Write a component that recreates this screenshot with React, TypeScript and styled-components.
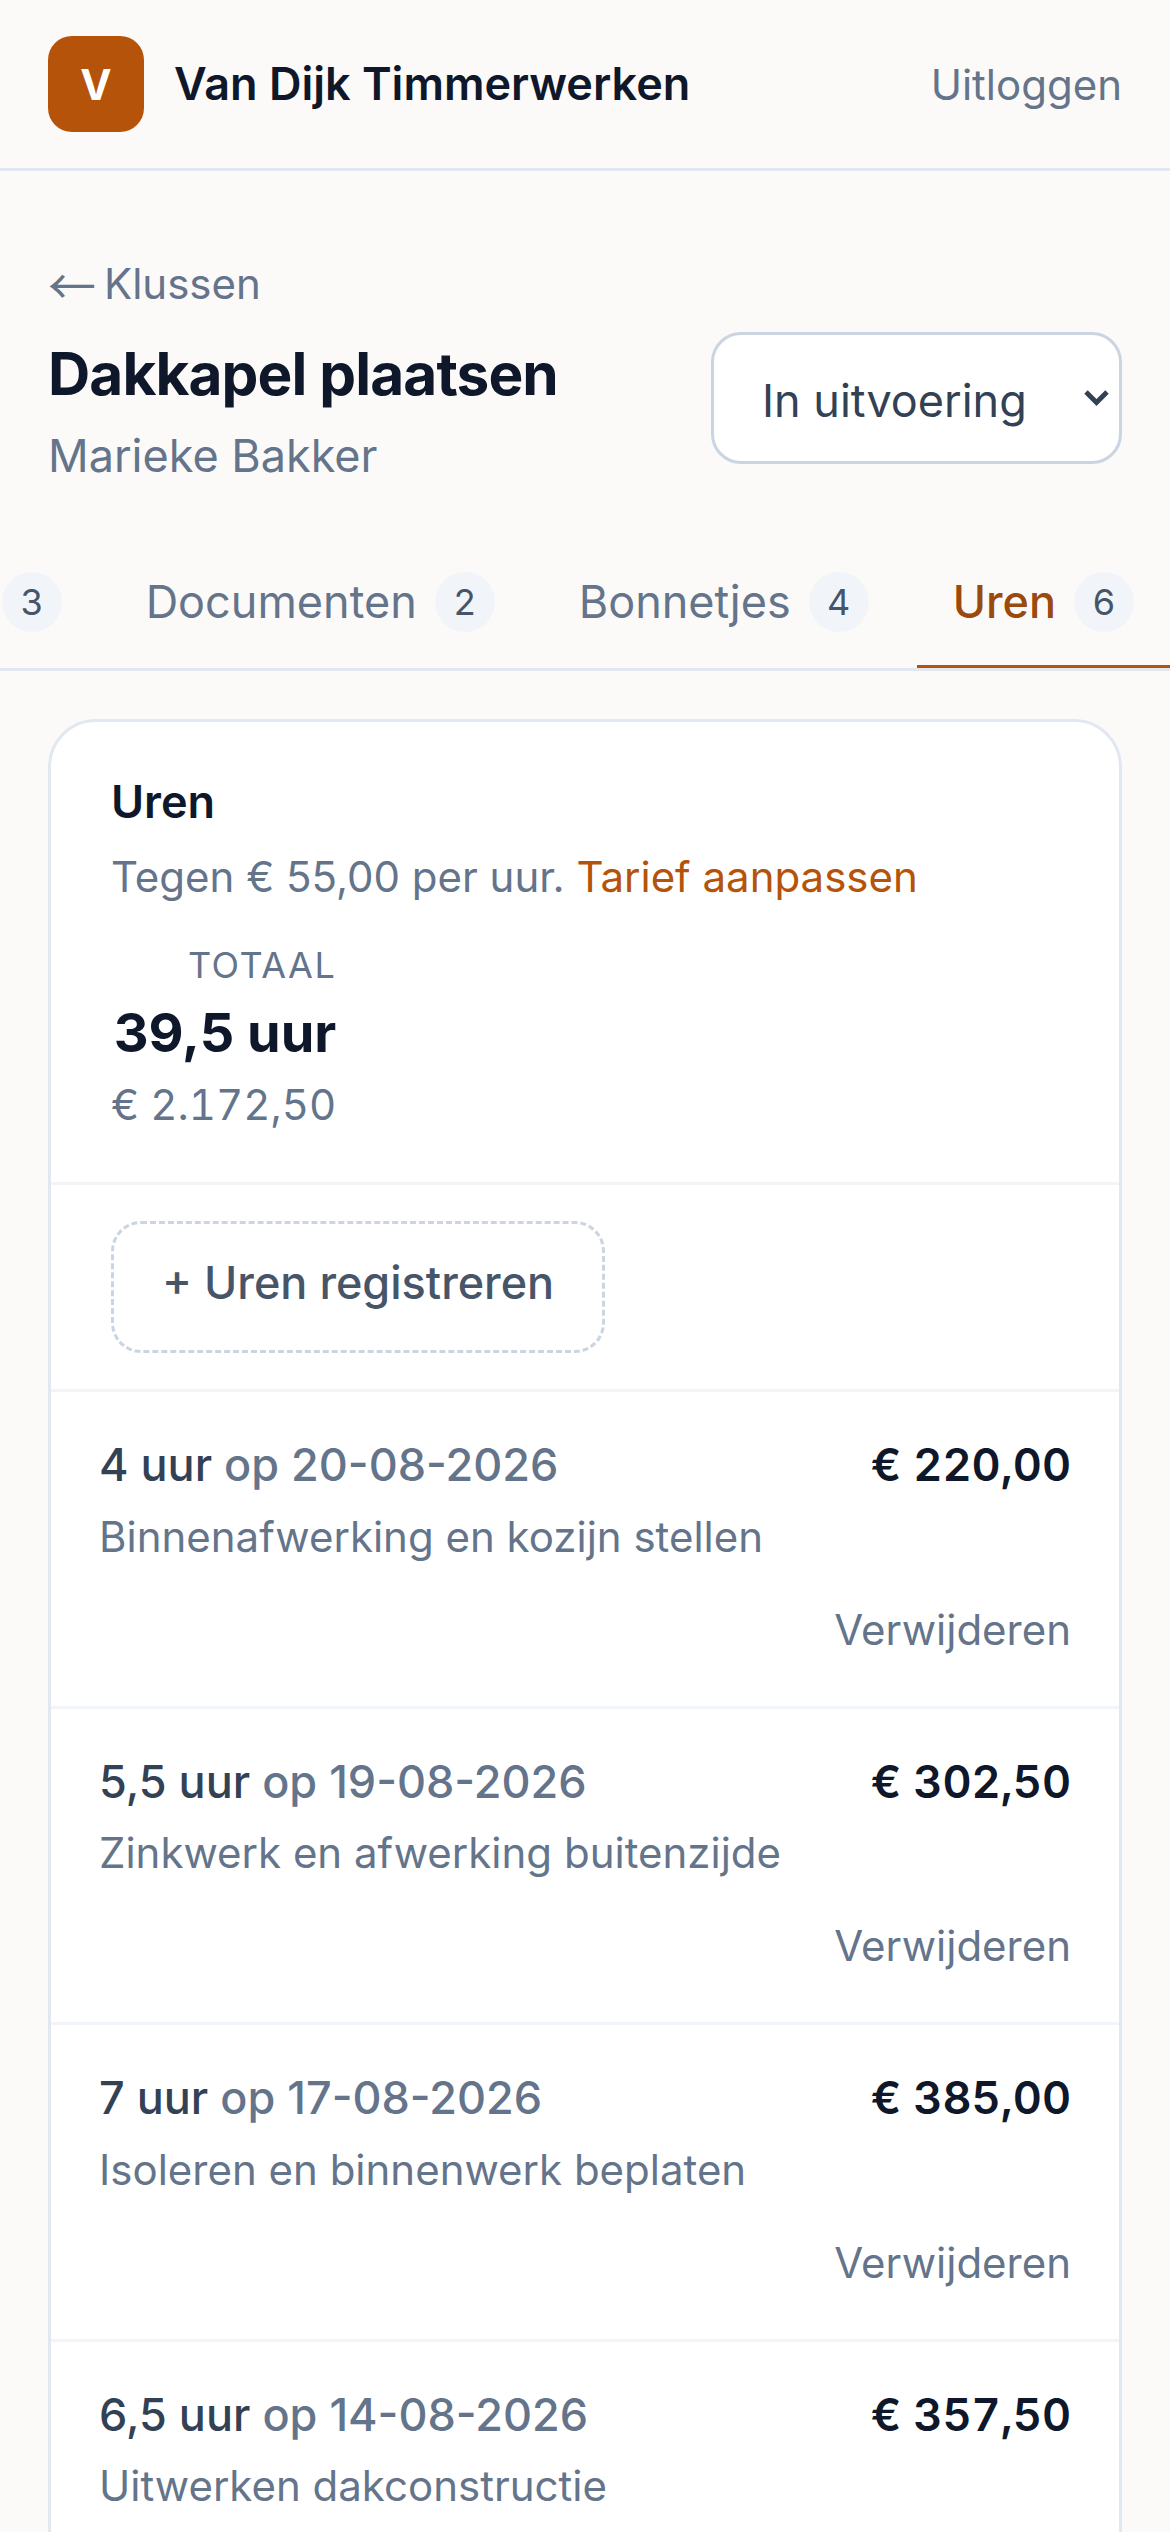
import styled, { createGlobalStyle } from "styled-components";

// the reference is a 390px phone layout shot at 3x
const GlobalStyle = createGlobalStyle`
  html {
    zoom: 3;
  }
  body {
    margin: 0;
    background: #fcfaf8;
    font-family: Inter, "Noto Sans", sans-serif;
    line-height: 1.5;
    color: #0f172a;
  }
  * {
    box-sizing: border-box;
  }
`;

const chevron =
  "data:image/svg+xml,%3Csvg xmlns='http://www.w3.org/2000/svg' viewBox='0 0 9 6'%3E%3Cpath d='M1 1l3.5 3.5L8 1' fill='none' stroke='%23334155' stroke-width='1.6'/%3E%3C/svg%3E";

const Page = styled.div`
  height: 844px;
  overflow: hidden;
`;

const Header = styled.header`
  display: flex;
  align-items: center;
  justify-content: space-between;
  padding: 12px 16px;
  border-bottom: 1px solid #e2e8f0;
`;

const Brand = styled.div`
  display: flex;
  align-items: center;
  gap: 10px;
`;

const Logo = styled.div`
  width: 32px;
  height: 32px;
  border-radius: 8px;
  background: #b45309;
  color: #fff;
  font-size: 14px;
  font-weight: 700;
  display: flex;
  align-items: center;
  justify-content: center;
`;

const BrandName = styled.div`
  font-size: 15px;
  font-weight: 600;
`;

const Logout = styled.a`
  font-size: 14px;
  color: #64748b;
`;

const Top = styled.section`
  padding: 27px 16px 0;
`;

const Back = styled.a`
  display: block;
  height: 21px;
  font-size: 14px;
  color: #64748b;
  margin-bottom: 5.5px;
`;

const Arrow = styled.span`
  font-family: "Noto Sans CJK SC", sans-serif;
  font-size: 16px;
  line-height: 1;
  vertical-align: -1.5px;
  margin-right: -1.3px;
`;

const TitleRow = styled.div`
  display: flex;
  align-items: flex-start;
  justify-content: space-between;
  gap: 12px;
`;

const Title = styled.h1`
  margin: 0 0 2px;
  font-size: 19.5px;
  line-height: 28px;
  font-weight: 700;
  letter-spacing: -0.3px;
`;

const Customer = styled.div`
  font-size: 15px;
  color: #64748b;
`;

const StatusSelect = styled.select`
  appearance: none;
  height: 44px;
  padding: 2px 0 0 16px;
  width: 137px;
  border: 1px solid #cbd5e1;
  border-radius: 10px;
  background: #fff url("${chevron}") no-repeat right 3px center / 9px 6px;
  color: #334155;
  font-family: inherit;
  font-size: 15px;
`;

const Tabs = styled.nav`
  display: flex;
  justify-content: flex-end;
  gap: 4px;
  margin-top: 14.5px;
  overflow: hidden;
  border-bottom: 1px solid #e2e8f0;
`;

const Tab = styled.a<{ $active?: boolean }>`
  flex: none;
  display: flex;
  align-items: center;
  gap: 6px;
  padding: 13px 12px 11px;
  font-size: 15px;
  line-height: 20px;
  color: ${(p) => (p.$active ? "#9a4a0c" : "#64748b")};
  font-weight: ${(p) => (p.$active ? 500 : 400)};
  border-bottom: 1px solid ${(p) => (p.$active ? "#b45309" : "transparent")};
`;

const Badge = styled.span`
  min-width: 20px;
  padding: 0 6px;
  height: 20px;
  border-radius: 999px;
  background: #f1f5f9;
  color: #475569;
  font-size: 12px;
  font-weight: 400;
  display: flex;
  align-items: center;
  justify-content: center;
`;

const Card = styled.div`
  margin: 16px 16px 0;
  background: #fff;
  border: 1px solid #e2e8f0;
  border-radius: 16px;
  overflow: hidden;
`;

const Summary = styled.div`
  padding: 15.5px 20px;
  border-bottom: 1px solid #f1f5f9;
`;

const CardTitle = styled.h2`
  margin: 0 0 3px;
  font-size: 15px;
  line-height: 1.5;
  font-weight: 600;
`;

const Rate = styled.p`
  margin: 0;
  font-size: 14px;
  color: #64748b;
`;

const RateLink = styled.a`
  color: #b45309;
`;

const Totals = styled.div`
  display: inline-block;
  margin-top: 10px;
  text-align: right;
  vertical-align: top;
`;

const TotalLabel = styled.div`
  font-size: 12px;
  letter-spacing: 0.5px;
  color: #64748b;
  text-transform: uppercase;
`;

const TotalHours = styled.div`
  font-size: 18px;
  font-weight: 700;
`;

const TotalAmount = styled.div`
  font-size: 14px;
  font-variant-numeric: tabular-nums;
  color: #64748b;
`;

const AddBar = styled.div`
  padding: 12px 20px;
  border-bottom: 1px solid #f1f5f9;
`;

const AddButton = styled.button`
  height: 44px;
  padding: 0 16px 3px;
  border: 1px dashed #cbd5e1;
  border-radius: 10px;
  background: #fff;
  color: #475569;
  font-family: inherit;
  font-size: 15px;
  font-weight: 500;
`;

const Entry = styled.div`
  padding: 13px 16px 15px;
  border-bottom: 1px solid #f1f5f9;
`;

const EntryTop = styled.div`
  display: flex;
  justify-content: space-between;
  gap: 12px;
  font-size: 15px;
`;

const EntryHours = styled.div`
  font-weight: 500;
  color: #334155;
`;

const EntryDate = styled.span`
  color: #64748b;
`;

const EntryAmount = styled.div`
  font-weight: 600;
  font-variant-numeric: tabular-nums;
`;

const EntryNote = styled.div`
  margin-top: 2px;
  font-size: 14px;
  color: #64748b;
`;

const EntryActions = styled.div`
  display: flex;
  justify-content: flex-end;
  margin-top: 10px;
  font-size: 14px;
  color: #64748b;
`;

const tabs = [
  { label: "Foto's", count: 3 },
  { label: "Documenten", count: 2 },
  { label: "Bonnetjes", count: 4 },
  { label: "Uren", count: 6, active: true },
];

const entries = [
  { hours: "4 uur", date: "20-08-2026", amount: "€ 220,00", note: "Binnenafwerking en kozijn stellen" },
  { hours: "5,5 uur", date: "19-08-2026", amount: "€ 302,50", note: "Zinkwerk en afwerking buitenzijde" },
  { hours: "7 uur", date: "17-08-2026", amount: "€ 385,00", note: "Isoleren en binnenwerk beplaten" },
  { hours: "6,5 uur", date: "14-08-2026", amount: "€ 357,50", note: "Uitwerken dakconstructie" },
];

const App = () => {
  return (
    <Page>
      <GlobalStyle />
      <Header>
        <Brand>
          <Logo>V</Logo>
          <BrandName>Van Dijk Timmerwerken</BrandName>
        </Brand>
        <Logout>Uitloggen</Logout>
      </Header>
      <Top>
        <Back>
          <Arrow>←</Arrow> Klussen
        </Back>
        <TitleRow>
          <div>
            <Title>Dakkapel plaatsen</Title>
            <Customer>Marieke Bakker</Customer>
          </div>
          <StatusSelect defaultValue="In uitvoering">
            <option>Gepland</option>
            <option>In uitvoering</option>
            <option>Afgerond</option>
          </StatusSelect>
        </TitleRow>
      </Top>
      <Tabs>
        {tabs.map((tab) => (
          <Tab key={tab.label} $active={tab.active}>
            {tab.label}
            <Badge>{tab.count}</Badge>
          </Tab>
        ))}
      </Tabs>
      <Card>
        <Summary>
          <CardTitle>Uren</CardTitle>
          <Rate>
            Tegen € 55,00 per uur. <RateLink>Tarief aanpassen</RateLink>
          </Rate>
          <Totals>
            <TotalLabel>Totaal</TotalLabel>
            <TotalHours>39,5 uur</TotalHours>
            <TotalAmount>€ 2.172,50</TotalAmount>
          </Totals>
        </Summary>
        <AddBar>
          <AddButton>+ Uren registreren</AddButton>
        </AddBar>
        {entries.map((entry) => (
          <Entry key={entry.date}>
            <EntryTop>
              <EntryHours>
                {entry.hours} <EntryDate>op {entry.date}</EntryDate>
              </EntryHours>
              <EntryAmount>{entry.amount}</EntryAmount>
            </EntryTop>
            <EntryNote>{entry.note}</EntryNote>
            <EntryActions>Verwijderen</EntryActions>
          </Entry>
        ))}
      </Card>
    </Page>
  );
};

export default App;
